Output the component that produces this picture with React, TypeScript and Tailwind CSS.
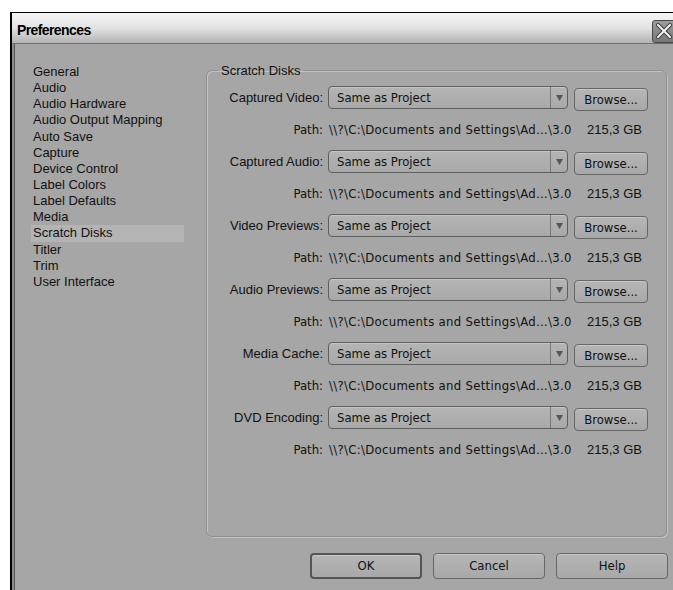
const sections = [
  "General",
  "Audio",
  "Audio Hardware",
  "Audio Output Mapping",
  "Auto Save",
  "Capture",
  "Device Control",
  "Label Colors",
  "Label Defaults",
  "Media",
  "Scratch Disks",
  "Titler",
  "Trim",
  "User Interface",
];

const disks = [
  "Captured Video",
  "Captured Audio",
  "Video Previews",
  "Audio Previews",
  "Media Cache",
  "DVD Encoding",
];

const uiFont = "font-['Liberation_Sans',Arial,sans-serif]";
const smallFont = "font-['DejaVu_Sans_Condensed','DejaVu_Sans',sans-serif]";

function TitleBar() {
  return (
    <div className="h-[31px] flex items-center justify-between bg-linear-to-b from-[#f6f6f6] via-[#e2e2e2] to-[#b2b2b2] border-b border-[#6f6f6f]">
      <span
        className={`pl-[5px] pt-[4px] text-[14px] font-bold text-black tracking-[-0.6px] ${uiFont}`}
      >
        Preferences
      </span>
      {/* close box, partly cut off by the right edge */}
      <div className="mr-[9px] mt-[6px] w-[29px] h-[23px] rounded-[3px] border border-[#4a4a4a] bg-linear-to-b from-[#9c9c9c] to-[#777] flex items-center justify-start pl-[3px]">
        <svg width="16" height="16" viewBox="0 0 16 16">
          <path d="M2 2 14 14M14 2 2 14" stroke="#3a3a3a" strokeWidth="4" strokeLinecap="square" />
          <path d="M2 2 14 14M14 2 2 14" stroke="#f4f4f4" strokeWidth="2" strokeLinecap="square" />
        </svg>
      </div>
    </div>
  );
}

function Dropdown() {
  return (
    <div className="h-[23px] flex rounded-[4px] border border-[#5f5f5f] bg-linear-to-b from-[#b4b4b4] to-[#a9a9a9] shadow-[inset_0_1px_0_#c6c6c6]">
      <span className={`flex-1 pl-[8px] leading-[21px] text-[13px] text-[#111] ${smallFont}`}>
        Same as Project
      </span>
      <span className="w-[17px] border-l border-[#7a7a7a] flex items-center justify-center">
        <svg width="7" height="6" viewBox="0 0 7 6">
          <path d="M0 0h7L3.5 6z" fill="#555" />
        </svg>
      </span>
    </div>
  );
}

function Button({ label, primary }: { label: string; primary?: boolean }) {
  return (
    <button
      type="button"
      className={`w-full h-full rounded-[4px] bg-linear-to-b from-[#b6b6b6] to-[#a8a8a8] shadow-[inset_0_1px_0_#c8c8c8] text-[13px] text-[#111] ${smallFont} ${
        primary ? "border-2 border-[#555]" : "border border-[#676767]"
      }`}
    >
      {label}
    </button>
  );
}

export default function App() {
  return (
    <div className="w-[673px] h-[590px] overflow-hidden bg-white pt-[12px] pl-[10px]">
      <div className="w-[680px] h-[600px] flex flex-col border-l-2 border-t border-black">
        <TitleBar />

        <div className="flex-1 flex bg-[#a6a6a6] border-l-2 border-[#8c8c8c] shadow-[inset_1px_0_0_#555]">
          {/* category list */}
          <ul className={`w-[170px] pl-[17px] pt-[20px] text-[13px] text-[#111] ${uiFont}`}>
            {sections.map((s) => (
              <li
                key={s}
                className={`h-[16.15px] leading-[16px] pl-[2px] ${
                  s === "Scratch Disks" ? "bg-[#b4b4b4]" : ""
                }`}
              >
                {s}
              </li>
            ))}
          </ul>

          <div className="ml-[22px] w-[461px] pt-[19px] flex flex-col">
            <fieldset className="h-[474px] rounded-[6px] border border-[#8f8f8f] shadow-[1px_1px_0_#c2c2c2,inset_1px_1px_0_#c2c2c2]">
              <legend className={`ml-[11px] px-[3px] text-[13px] leading-[15px] text-[#111] ${uiFont}`}>
                Scratch Disks
              </legend>

              <div className="pt-[8px]">
                {disks.map((d) => (
                  <div key={d} className="h-[64px]">
                    <div className="grid grid-cols-[116px_240px_75px] gap-x-[5px] h-[23px] items-center">
                      <span className={`text-right text-[13px] text-[#111] ${uiFont}`}>{d}:</span>
                      <Dropdown />
                      <div className="h-[23px] ml-[1px]">
                        <Button label="Browse..." />
                      </div>
                    </div>
                    <div className="grid grid-cols-[116px_240px_75px] gap-x-[5px] mt-[11px] h-[20px] items-center text-[13px] text-[#111]">
                      <span className={`text-right ${smallFont}`}>Path:</span>
                      <span className={`pl-[1px] whitespace-nowrap tracking-[0.3px] ${smallFont}`}>
                        \\?\C:\Documents and Settings\Ad…\3.0
                      </span>
                      <span className={`text-right pr-[6px] ${uiFont}`}>215,3 GB</span>
                    </div>
                  </div>
                ))}
              </div>
            </fieldset>

            <div className="mt-[15px] h-[26px] flex justify-end gap-[11px]">
              <div className="w-[112px]">
                <Button label="OK" primary />
              </div>
              <div className="w-[112px]">
                <Button label="Cancel" />
              </div>
              <div className="w-[112px] mr-[-1px]">
                <Button label="Help" />
              </div>
            </div>
          </div>
        </div>
      </div>
    </div>
  );
}
